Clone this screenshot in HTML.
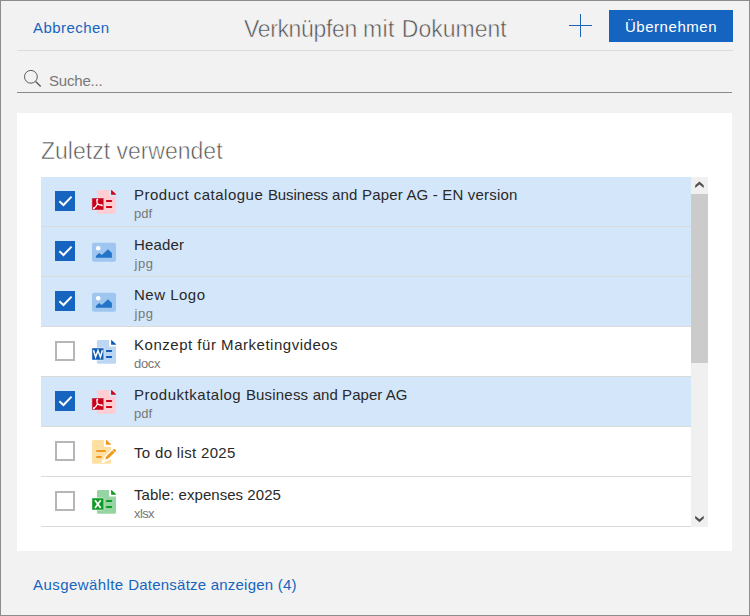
<!DOCTYPE html>
<html><head><meta charset="utf-8">
<style>
html,body{margin:0;padding:0;}
body{width:750px;height:616px;background:#f2f2f2;font-family:"Liberation Sans",sans-serif;position:relative;overflow:hidden;}
.frame{position:absolute;left:0;top:0;width:748px;height:614px;border:1px solid #8c8c8c;z-index:10;pointer-events:none;}
.abs{position:absolute;white-space:nowrap;}
.link{color:#1565c0;font-size:15px;}
.title{color:#505050;font-size:23px;-webkit-text-stroke:0.55px #f2f2f2;}
.btn{left:609px;top:10px;width:124px;height:32px;background:#1565c0;color:#fff;font-size:15px;text-align:center;line-height:34px;letter-spacing:0.55px;}
.hr1{left:17px;top:50px;width:716px;height:1px;background:#dcdcdc;}
.hr2{left:17px;top:92px;width:715px;height:1px;background:#8a8a8a;}
.panel{left:17px;top:113px;width:715px;height:438px;background:#fff;}
.row{left:41px;width:650px;height:49px;border-bottom:1px solid #dadada;color:#fff;}
.row.sel{background:#d4e6fa;color:#d4e6fa;}
.cb{position:absolute;left:14px;top:14px;width:20px;height:20px;box-sizing:border-box;}
.cb.on{background:#1565c0;}
.cb.off{border:2px solid #b6b6b6;background:#fff;}
.cb svg{position:absolute;left:0;top:0;}
.name{position:absolute;left:93px;top:8.6px;font-size:15px;color:#292929;white-space:nowrap;}
.ext{position:absolute;left:93px;top:28.6px;font-size:13px;color:#777;white-space:nowrap;}
.ico{position:absolute;left:47px;top:9px;width:32px;height:32px;}
.sb{left:691px;top:177px;width:17px;height:350px;background:#f0f0f0;}
.thumb{left:691px;top:194px;width:17px;height:169px;background:#cbcbcb;}
</style></head><body>
<svg width="0" height="0" style="position:absolute">
<defs>
<path id="page" d="M10.4 4.05H21V10.6H28.05V26.3a1.5 1.5 0 0 1-1.5 1.5H10.4a1.5 1.5 0 0 1-1.5-1.5V5.55a1.5 1.5 0 0 1 1.5-1.5Z"/>
<path id="fold" d="M23.1 4.4a.4 .4 0 0 1 .7-.25L27.9 8.1a.4 .4 0 0 1-.25 .7H23.5a.4 .4 0 0 1-.4-.4Z"/>
<g id="bars"><rect x="17.9" y="14" width="6.3" height="1.9" rx=".9"/><rect x="17.9" y="20" width="6.3" height="1.9" rx=".9"/></g>
<rect id="sq" x="3.9" y="11.95" width="11.9" height="12.05" rx=".6"/>
<path id="chk" d="M4.35 10.3L8.5 14L16.6 5.65" fill="none" stroke="#fff" stroke-width="2"/>
</defs>
</svg>
<div class="frame"></div>
<div class="abs link" style="left:33px;top:19px;letter-spacing:0.44px;">Abbrechen</div>
<div class="abs title" style="left:244px;top:16px;"><span style="letter-spacing:-0.35px;">Verknüpfen </span><span style="letter-spacing:0.46px;">mit </span><span style="letter-spacing:0px;">Dokument</span></div>
<svg class="abs" style="left:560px;top:6px;" width="40" height="40" viewBox="0 0 40 40"><path d="M20.5 8V31M9 19.5H32" stroke="#1a64b7" stroke-width="1" fill="none"/></svg>
<div class="abs btn">Übernehmen</div>
<div class="abs hr1"></div>
<svg class="abs" style="left:14px;top:58px;" width="40" height="34" viewBox="0 0 40 34"><circle cx="16.9" cy="18.8" r="6.4" stroke="#5a5a5a" stroke-width="1" fill="none"/><path d="M21.6 23.5L26.7 28.5" stroke="#5a5a5a" stroke-width="1.4"/></svg>
<div class="abs" style="left:49px;top:71.6px;font-size:15px;color:#777;letter-spacing:-0.2px;">Suche...</div>
<div class="abs hr2"></div>
<div class="abs panel"></div>
<div class="abs title" style="left:41px;top:138px;color:#555;-webkit-text-stroke-color:#fff;">Zuletzt verwendet</div>

<div class="abs row sel" style="top:177px;"><div class="cb on"><svg width="20" height="20"><use href="#chk"/></svg></div>
<svg class="ico" viewBox="0 0 32 32"><use href="#page" fill="#ffcdd2"/><use href="#fold" fill="#cc0018"/><use href="#bars" fill="#cc0018"/><use href="#sq" fill="#cc0018" stroke="currentColor" stroke-width=".5"/><path d="M9.4 13.4C8.6 13.4 8.9 15.8 9.4 17.8C8.6 19.9 7.2 21.9 5.6 22.5M9.4 17.8C10.6 18.9 12.6 19.2 14 19.5" fill="none" stroke="#fff" stroke-width="1.25" stroke-linecap="round"/><circle cx="9.4" cy="13.7" r=".9" fill="#fff"/><circle cx="5.8" cy="22.2" r=".95" fill="#fff"/><circle cx="13.6" cy="19.3" r=".95" fill="#fff"/></svg>
<div class="name"><span style="letter-spacing:0.49px;">Product catalogue </span><span style="letter-spacing:-0.1px;">Business </span><span style="letter-spacing:0.18px;">and Paper AG - EN version</span></div><div class="ext">pdf</div></div>

<div class="abs row sel" style="top:227px;"><div class="cb on"><svg width="20" height="20"><use href="#chk"/></svg></div>
<svg class="ico" viewBox="0 0 32 32"><rect x="4.05" y="6.85" width="24" height="18.95" rx="2" fill="#9ec6f0"/><circle cx="10.2" cy="12.2" r="2.3" fill="#fff"/><path d="M7.9 21.8V20L11.2 17.1L13.8 19L20 13.2L23.9 16.9V21.8Z" fill="#2474c8"/></svg>
<div class="name" style="letter-spacing:0.17px;">Header</div><div class="ext" style="left:93.5px;letter-spacing:0.6px;">jpg</div></div>

<div class="abs row sel" style="top:277px;"><div class="cb on"><svg width="20" height="20"><use href="#chk"/></svg></div>
<svg class="ico" viewBox="0 0 32 32"><rect x="4.05" y="6.85" width="24" height="18.95" rx="2" fill="#9ec6f0"/><circle cx="10.2" cy="12.2" r="2.3" fill="#fff"/><path d="M7.9 21.8V20L11.2 17.1L13.8 19L20 13.2L23.9 16.9V21.8Z" fill="#2474c8"/></svg>
<div class="name" style="letter-spacing:0.5px;">New Logo</div><div class="ext" style="left:93.5px;letter-spacing:0.6px;">jpg</div></div>

<div class="abs row" style="top:327px;"><div class="cb off"></div>
<svg class="ico" viewBox="0 0 32 32"><use href="#page" fill="#bcd6f3"/><use href="#fold" fill="#0f5cb5"/><use href="#bars" fill="#0f5cb5"/><use href="#sq" fill="#0f5cb5" stroke="currentColor" stroke-width=".5"/><path d="M5.5 14.3L7.6 21L10 14.6L12.4 21L14.5 14.3" fill="none" stroke="#fff" stroke-width="1.5" stroke-linejoin="miter"/></svg>
<div class="name" style="letter-spacing:0.52px;">Konzept für Marketingvideos</div><div class="ext" style="letter-spacing:-0.3px;">docx</div></div>

<div class="abs row sel" style="top:377px;"><div class="cb on"><svg width="20" height="20"><use href="#chk"/></svg></div>
<svg class="ico" viewBox="0 0 32 32"><use href="#page" fill="#ffcdd2"/><use href="#fold" fill="#cc0018"/><use href="#bars" fill="#cc0018"/><use href="#sq" fill="#cc0018" stroke="currentColor" stroke-width=".5"/><path d="M9.4 13.4C8.6 13.4 8.9 15.8 9.4 17.8C8.6 19.9 7.2 21.9 5.6 22.5M9.4 17.8C10.6 18.9 12.6 19.2 14 19.5" fill="none" stroke="#fff" stroke-width="1.25" stroke-linecap="round"/><circle cx="9.4" cy="13.7" r=".9" fill="#fff"/><circle cx="5.8" cy="22.2" r=".95" fill="#fff"/><circle cx="13.6" cy="19.3" r=".95" fill="#fff"/></svg>
<div class="name"><span style="letter-spacing:0.51px;">Produktkatalog </span><span style="letter-spacing:0.19px;">Business </span><span style="letter-spacing:0.06px;">and Paper AG</span></div><div class="ext">pdf</div></div>

<div class="abs row" style="top:427px;"><div class="cb off"></div>
<svg class="ico" viewBox="0 0 32 32"><path d="M5.55 3.9H15.85V10.65H23V26.3a1.5 1.5 0 0 1-1.5 1.5H5.55a1.5 1.5 0 0 1-1.5-1.5V5.4a1.5 1.5 0 0 1 1.5-1.5Z" fill="#ffe0a3"/><path d="M17.9 4.3a.4 .4 0 0 1 .7-.25L22.8 8.1a.4 .4 0 0 1-.25 .7H18.3a.4 .4 0 0 1-.4-.4Z" fill="#ee9a20"/><rect x="8.05" y="14" width="9.85" height="1.9" rx=".9" fill="#ee9a20"/><rect x="8.05" y="20" width="5.95" height="1.9" rx=".9" fill="#ee9a20"/>
<path d="M15 25.6L17.1 23.4L18.3 20.2L26 12.9L28 15.1L20.3 22.4Z" fill="#fff" stroke="#fff" stroke-width="2.8" stroke-linejoin="round"/><path d="M14.6 26L23.2 23.5V18Z" fill="#fff"/>
<path d="M17.1 23.4L18.3 20.2L25.6 13.3a1.5 1.5 0 0 1 2.1 2.1L20.3 22.4Z" fill="#ee9a20"/><path d="M24.4 14.3L26.5 16.5" stroke="#fff" stroke-width=".7"/></svg>
<div class="name" style="top:16.6px;letter-spacing:0.33px;">To do list 2025</div></div>

<div class="abs row" style="top:477px;"><div class="cb off"></div>
<svg class="ico" viewBox="0 0 32 32"><use href="#page" fill="#97d4a3"/><use href="#fold" fill="#0e9a25"/><use href="#bars" fill="#0e9a25"/><use href="#sq" fill="#0e9a25" stroke="currentColor" stroke-width=".5"/><path d="M7 14.2L12.7 22.1M12.7 14.2L7 22.1" fill="none" stroke="#fff" stroke-width="1.7"/></svg>
<div class="name" style="letter-spacing:0.05px;">Table: expenses 2025</div><div class="ext" style="letter-spacing:-0.6px;">xlsx</div></div>

<div class="abs sb"></div>
<div class="abs thumb"></div>
<svg class="abs" style="left:691px;top:177px;" width="17" height="350" viewBox="691 177 17 350"><path d="M695.2 185.3L699.45 181.5L703.7 185.3V188L699.45 184.6L695.2 188Z" fill="#505050"/><path d="M695.2 515.8L699.45 519.2L703.7 515.8V518.5L699.45 522.3L695.2 518.5Z" fill="#505050"/></svg>
<div class="abs link" style="left:33px;top:576px;"><span style="letter-spacing:0.43px;">Ausgewählte </span><span style="letter-spacing:0.22px;">Datensätze anzeigen (4)</span></div>
</body></html>
